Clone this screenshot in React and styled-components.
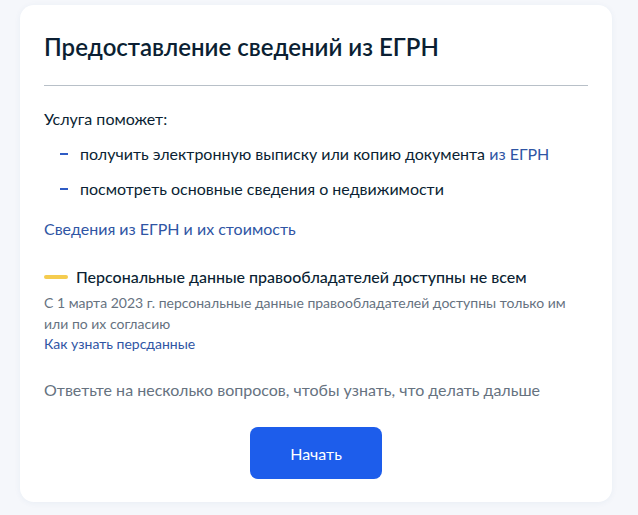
import styled, { createGlobalStyle } from 'styled-components';

const GlobalStyle = createGlobalStyle`
	html, body {
		margin: 0;
		padding: 0;
		background: #f5f7fb;
		font-family: Lato, 'Noto Sans', sans-serif;
		color: #0b1f33;
	}
`;

const Page = styled.div`
	padding: 5px 26px 14px 20px;
`;

const Card = styled.section`
	background: #fff;
	border-radius: 14px;
	box-shadow: 0 1px 6px rgba(40, 80, 140, 0.06);
	padding: 27px 24px 23px 24px;
	display: flex;
	flex-direction: column;
`;

const Title = styled.h1`
	margin: 0;
	font-size: 24px;
	line-height: 30px;
	font-weight: 600;
	color: #0b1f33;
`;

const Divider = styled.hr`
	margin: 23px 0 21px 0;
	border: 0;
	border-top: 1px solid #b8c0c8;
`;

const Text = styled.p`
	margin: 0;
	font-size: 16px;
	line-height: 24px;
	color: ${(p) => (p.$muted ? '#66727f' : '#0b1f33')};
`;

const List = styled.ul`
	list-style: none;
	margin: 11px 0 0 0;
	padding: 0 0 0 16px;
	display: flex;
	flex-direction: column;
	gap: 11px;
`;

const Item = styled.li`
	display: flex;
	align-items: center;
	gap: 12px;
	font-size: 16px;
	line-height: 24px;
	&::before {
		content: '';
		width: 8px;
		height: 2px;
		background: #2f5bc4;
		flex: none;
	}
`;

const Link = styled.a`
	color: #2f55a4;
	text-decoration: none;
	font-size: ${(p) => p.$size || 16}px;
	line-height: ${(p) => (p.$size === 14 ? 20 : 24)}px;
`;

const BlockLink = styled(Link)`
	display: block;
	margin-top: ${(p) => p.$top || 0}px;
`;

const Notice = styled.div`
	margin-top: 24px;
	display: flex;
	flex-direction: column;
`;

const NoticeHead = styled.div`
	display: flex;
	align-items: center;
	gap: 8px;
	font-size: 16px;
	line-height: 24px;
	font-weight: 500;
	&::before {
		content: '';
		width: 24px;
		height: 4px;
		border-radius: 2px;
		background: #f5cc4f;
		flex: none;
	}
`;

const Small = styled.p`
	margin: 3px 0 0 0;
	font-size: 14px;
	line-height: 21px;
	color: #66727f;
`;

const Footer = styled.div`
	margin-top: 24px;
	display: flex;
	flex-direction: column;
	align-items: center;
	gap: 25px;
	& > p {
		align-self: stretch;
	}
`;

const Button = styled.button`
	width: 132px;
	height: 52px;
	border: 0;
	border-radius: 8px;
	background: #1d5deb;
	color: #fff;
	font-family: inherit;
	font-size: 16px;
	cursor: pointer;
`;

export default function App() {
	return (
		<Page>
			<GlobalStyle />
			<Card>
				<Title>Предоставление сведений из ЕГРН</Title>
				<Divider />
				<Text>Услуга поможет:</Text>
				<List>
					<Item>
						<span>
							получить электронную выписку или копию документа <Link href='#'>из ЕГРН</Link>
						</span>
					</Item>
					<Item>посмотреть основные сведения о недвижимости</Item>
				</List>
				<BlockLink href='#' $top={16}>
					Сведения из ЕГРН и их стоимость
				</BlockLink>
				<Notice>
					<NoticeHead>Персональные данные правообладателей доступны не всем</NoticeHead>
					<Small>С 1 марта 2023 г. персональные данные правообладателей доступны только им или по их согласию</Small>
					<BlockLink href='#' $size={14}>
						Как узнать персданные
					</BlockLink>
				</Notice>
				<Footer>
					<Text $muted>Ответьте на несколько вопросов, чтобы узнать, что делать дальше</Text>
					<Button>Начать</Button>
				</Footer>
			</Card>
		</Page>
	);
}
